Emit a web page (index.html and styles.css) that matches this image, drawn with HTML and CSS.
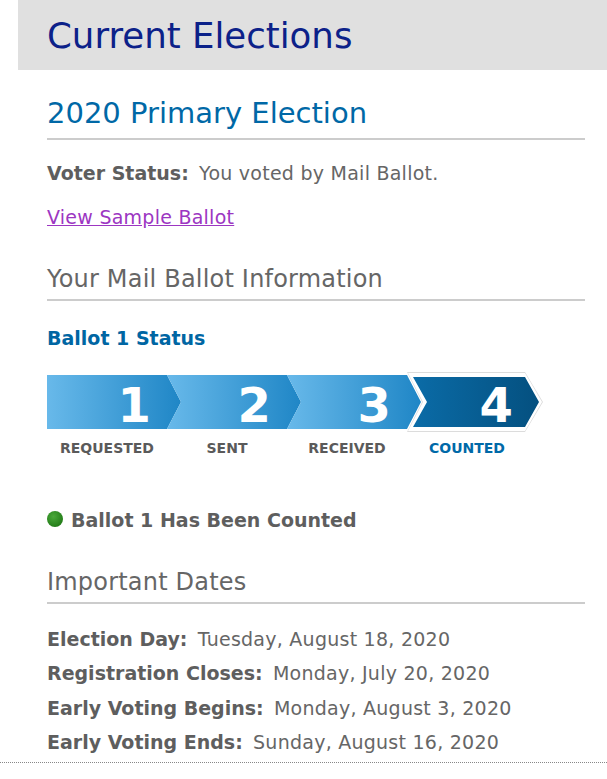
FILE: index.html
```html
<!DOCTYPE html>
<html>
<head>
  <title>Current Elections</title>
  <link rel="stylesheet" href="styles.css">
</head>
<body>
<div class="page">
  <div class="banner">
    <h1>Current Elections</h1>
  </div>
  <div class="content">
    <h2 class="election-title">2020 Primary Election</h2>
    <p class="status"><strong>Voter Status:</strong> You voted by Mail Ballot.</p>
    <p class="sample"><a href="#">View Sample Ballot</a></p>

    <h3 class="section-title">Your Mail Ballot Information</h3>
    <h4 class="ballot-title">Ballot 1 Status</h4>

    <div class="steps">
      <div class="step step-first"><span class="step-num">1</span></div>
      <div class="step"><span class="step-num">2</span></div>
      <div class="step"><span class="step-num">3</span></div>
      <div class="step-last">
        <div class="step-last-frame">
          <div class="step-last-body"><span class="step-num">4</span></div>
        </div>
      </div>
    </div>
    <div class="step-labels">
      <span>REQUESTED</span>
      <span>SENT</span>
      <span>RECEIVED</span>
      <span class="current">COUNTED</span>
    </div>

    <p class="counted"><span class="dot"></span>Ballot 1 Has Been Counted</p>

    <h3 class="section-title">Important Dates</h3>
    <ul class="dates">
      <li><strong>Election Day:</strong> Tuesday, August 18, 2020</li>
      <li><strong>Registration Closes:</strong> Monday, July 20, 2020</li>
      <li><strong>Early Voting Begins:</strong> Monday, August 3, 2020</li>
      <li><strong>Early Voting Ends:</strong> Sunday, August 16, 2020</li>
    </ul>
  </div>
  <div class="footer-rule"></div>
</div>
</body>
</html>
```
FILE: styles.css
```css
body {
  margin: 0;
  font-family: "DejaVu Sans", Verdana, sans-serif;
  color: #666;
  background-color: #fff;
}
.banner {
  margin-left: 18px;
  height: 70px;
  background-color: #e0e0e0;
}
.banner h1 {
  margin: 0;
  padding: 2px 29px 0;
  font-size: 35.6px;
  font-weight: normal;
  line-height: 68px;
  color: #0c2189;
}
.content {
  margin-left: 18px;
  padding: 0 22px 0 29px;
}
.election-title {
  margin: 25px 0 0;
  padding-bottom: 7px;
  border-bottom: 2px solid #ccc;
  font-size: 29px;
  font-weight: normal;
  line-height: 36px;
  color: #0068a6;
}
.status {
  margin: 21px 0 0;
  font-size: 19px;
  line-height: 24px;
  letter-spacing: 0.25px;
}
.status strong,
.dates strong {
  color: #5e5e5e;
  margin-right: 4px;
  letter-spacing: 0;
}
.sample {
  margin: 20px 0 0;
  font-size: 19px;
  line-height: 24px;
  letter-spacing: 0.25px;
}
.sample a {
  color: #9c36c2;
}
.section-title {
  margin: 35px 0 0;
  padding-bottom: 5px;
  border-bottom: 2px solid #ccc;
  font-size: 24px;
  font-weight: normal;
  line-height: 30px;
  letter-spacing: 0.2px;
  color: #666;
}
.ballot-title {
  margin: 25px 0 0;
  font-size: 19px;
  line-height: 24px;
  color: #0066a3;
}
.steps {
  display: flex;
  align-items: center;
  height: 60px;
  margin-top: 22px;
}
.step {
  width: 134px;
  height: 54px;
  margin-left: -14px;
  background: linear-gradient(to right, #68b9ea, #1f86c6);
  clip-path: polygon(0 0, 120px 0, 134px 27px, 120px 54px, 0 54px, 14px 27px);
}
.step-first {
  margin-left: 0;
  clip-path: polygon(0 0, 120px 0, 134px 27px, 120px 54px, 0 54px);
}
.step-num {
  display: block;
  box-sizing: border-box;
  height: 100%;
  padding: 7px 30px 0 0;
  text-align: right;
  font-size: 48px;
  font-weight: bold;
  line-height: 47px;
  color: #fff;
}
.step-last {
  width: 136px;
  height: 60px;
  margin-left: -14px;
  background-color: #dcdcdc;
  clip-path: polygon(0 0, 118px 0, 136px 30px, 118px 60px, 0 60px, 15px 30px);
}
.step-last-frame {
  height: 100%;
  background-color: #fff;
  clip-path: polygon(1px 1px, 118px 1px, 135px 30px, 118px 59px, 1px 59px, 16px 30px);
}
.step-last-body {
  height: 100%;
  background: linear-gradient(to right, #0b6da9, #044f7e);
  clip-path: polygon(6px 5px, 118px 5px, 132px 30px, 118px 55px, 6px 55px, 20px 30px);
}
.step-last-body .step-num {
  padding-top: 10px;
}
.step-labels {
  display: flex;
  margin-top: 6px;
}
.step-labels span {
  width: 120px;
  text-align: center;
  font-size: 14px;
  font-weight: bold;
  line-height: 20px;
  color: #5a5a5a;
}
.step-labels .current {
  color: #0069a8;
}
.counted {
  display: flex;
  align-items: center;
  margin: 50px 0 0;
  font-size: 19px;
  font-weight: bold;
  line-height: 24px;
  color: #5e5e5e;
}
.dot {
  width: 16px;
  height: 16px;
  margin: -2px 8px 0 0;
  border-radius: 50%;
  background: radial-gradient(circle at 40% 35%, #4aa83a, #257f1a 70%, #1d6e14);
}
.dates {
  list-style: none;
  margin: 18px 0 0;
  padding: 0;
  font-size: 19px;
  line-height: 34.3px;
  letter-spacing: 0.25px;
}
.footer-rule {
  margin-top: 3px;
  border-top: 1px dotted #888;
}
```
